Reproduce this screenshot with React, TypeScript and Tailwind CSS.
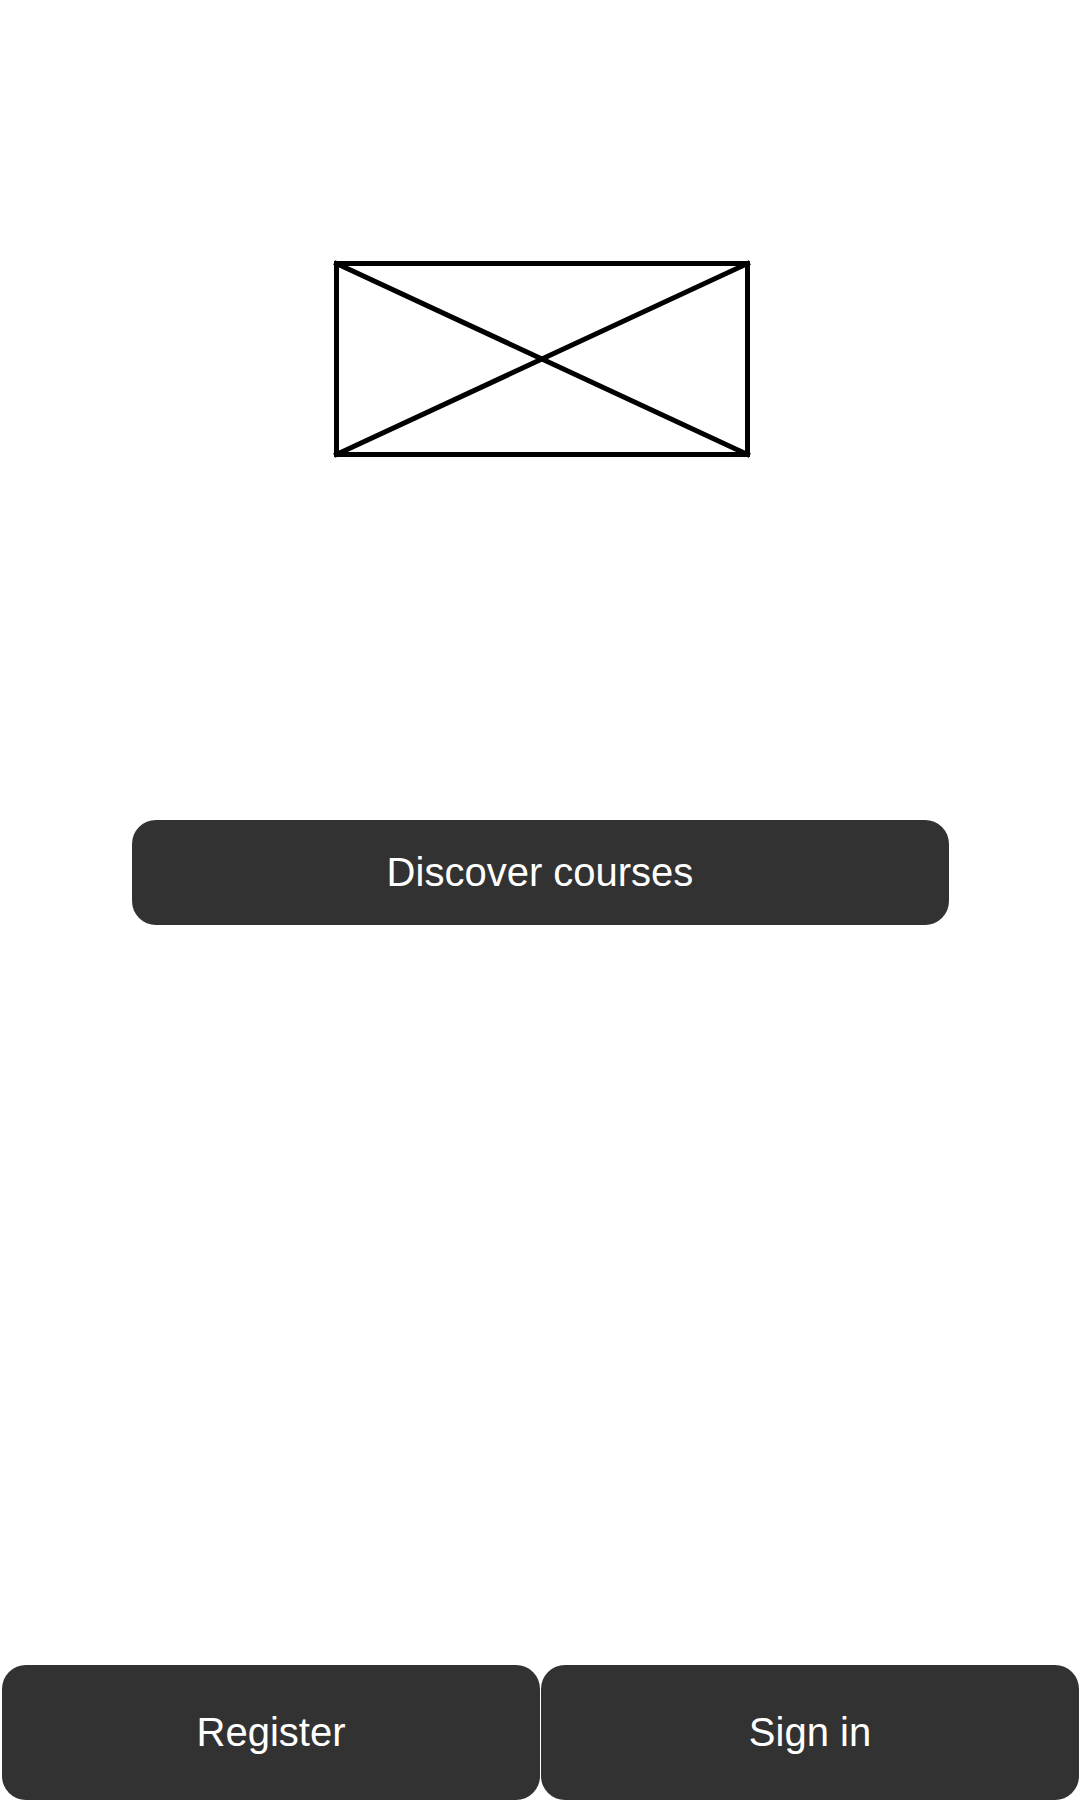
import type { ReactNode } from "react";

function ActionButton({ children, className }: { children: ReactNode; className: string }) {
  return (
    <button
      type="button"
      className={`w-full cursor-pointer rounded-3xl bg-[#323232] text-center text-[40px] leading-[45px] text-white ${className}`}
    >
      {children}
    </button>
  );
}

function LogoPlaceholder() {
  return (
    <svg
      role="img"
      aria-label="Logo placeholder"
      viewBox="0 0 420 200"
      className="h-[200px] w-[420px] max-w-full"
      fill="none"
      stroke="black"
      strokeWidth="5"
    >
      <rect x="4.5" y="4.5" width="411" height="191" />
      <path d="M4.5 4.5 415.5 195.5M415.5 4.5 4.5 195.5" strokeLinecap="square" />
    </svg>
  );
}

export default function App() {
  return (
    <div className="flex min-h-screen flex-col bg-white font-['Liberation_Sans',Arial,sans-serif]">
      <main className="flex-1">
        <header className="flex justify-center pt-[259px] pl-1">
          <LogoPlaceholder />
        </header>
        <section className="mx-auto mt-[361px] w-full max-w-[817px]">
          <ActionButton className="py-[30px]">Discover courses</ActionButton>
        </section>
      </main>
      <nav aria-label="Account" className="grid grid-cols-2 gap-px pr-px pl-0.5">
        <ActionButton className="py-[45px]">Register</ActionButton>
        <ActionButton className="py-[45px]">Sign in</ActionButton>
      </nav>
    </div>
  );
}
